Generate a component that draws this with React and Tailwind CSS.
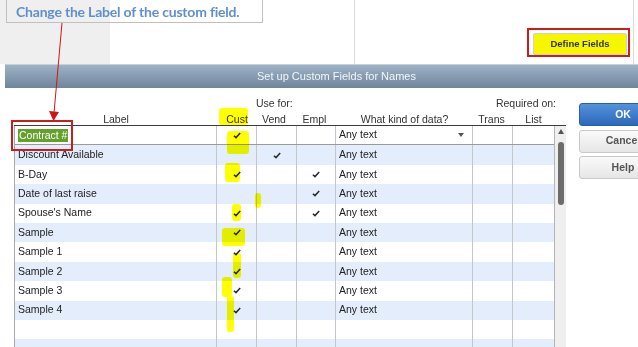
import React from 'react';

const rows = [
  { label: 'Contract #', kind: 'Any text', cust: true, edit: true },
  { label: 'Discount Available', kind: 'Any text', vend: true },
  { label: 'B-Day', kind: 'Any text', cust: true, empl: true },
  { label: 'Date of last raise', kind: 'Any text', empl: true },
  { label: "Spouse's Name", kind: 'Any text', cust: true, empl: true },
  { label: 'Sample', kind: 'Any text', cust: true },
  { label: 'Sample 1', kind: 'Any text', cust: true },
  { label: 'Sample 2', kind: 'Any text', cust: true },
  { label: 'Sample 3', kind: 'Any text', cust: true },
  { label: 'Sample 4', kind: 'Any text', cust: true },
  { label: '', kind: '' },
  { label: '', kind: '' },
];

// yellow highlighter strokes [x, y, w, h]
const marks = [
  [219, 108, 29, 17],
  [227, 131, 22, 23],
  [225, 163, 15, 19],
  [255, 193, 6, 15],
  [232, 204, 9, 17],
  [222, 228, 23, 18],
  [233, 253, 8, 25],
  [222, 277, 10, 20],
  [227, 296, 7, 36],
];

const Check = () => (
  <svg width="8" height="7" viewBox="0 0 8 7">
    <path d="M0.9 3.7 L3 5.6 L7.2 1" fill="none" stroke="#2a2a2a" strokeWidth="1.5" />
  </svg>
);

const cols = 'grid grid-cols-[202px_40px_40px_39px_137px_40px_41px]';
const cell = 'border-r border-[#c3c7cd] flex items-center justify-center';

const Row = ({ r, i }) => (
  <div
    className={`${cols} h-[19.4px] ${i % 2 ? 'bg-[#e3edfb]' : 'bg-white'} ${
      r.edit ? 'border-b border-[#9a9a9a]' : ''
    }`}
  >
    <div className="border-r border-[#c3c7cd] flex items-center pl-[3px]">
      {r.edit ? (
        <span className="bg-[#64a12c] text-white px-[1px] leading-[13px]">{r.label}</span>
      ) : (
        r.label
      )}
    </div>
    <div className={cell}>{r.cust && <Check />}</div>
    <div className={cell}>{r.vend && <Check />}</div>
    <div className={cell}>{r.empl && <Check />}</div>
    <div className="border-r border-[#c3c7cd] flex items-center justify-between pl-[3px] pr-[8px]">
      <span>{r.kind}</span>
      {r.edit && <span className="w-0 h-0 border-x-[3.5px] border-x-transparent border-t-[4px] border-t-[#555]" />}
    </div>
    <div className="border-r border-[#c3c7cd]" />
    <div />
  </div>
);

const Btn = ({ children, primary }) => (
  <div
    className={`h-[23px] w-[88px] rounded-[3px] flex items-center justify-center font-bold text-[10.5px] ${
      primary
        ? 'bg-gradient-to-b from-[#5592db] to-[#2c68b9] text-white border border-[#2a5fa8]'
        : 'bg-gradient-to-b from-[#fafafa] to-[#e6e6e6] text-[#555] border border-[#c9c9c9]'
    }`}
  >
    {children}
  </div>
);

export default function App() {
  return (
    <div className="relative w-[638px] h-[347px] overflow-hidden bg-white text-[#222] font-['Liberation_Sans',Arial,sans-serif] text-[10.5px]">
      {/* window behind the dialog */}
      <div className="flex h-[64px]">
        <div className="w-[110px] bg-[#efefef]" />
        <div className="w-[245px] border-r border-[#dcdcdc]" />
        <div className="w-[279px] border-r border-[#dcdcdc] flex items-end justify-end pr-[6px] pb-[9px]">
          <div className="h-[22px] w-[94px] rounded-[2px] border border-[#d0d0d0] bg-[#f6f600] flex items-center justify-center font-bold text-[9.5px] text-[#333]">
            Define Fields
          </div>
        </div>
      </div>

      {/* dialog title */}
      <div className="ml-[5px] w-[663px] h-[24px] bg-gradient-to-b from-[#9fb2c6] to-[#6f859c] border-t border-[#c4d0dc] flex items-center justify-center text-[11px] text-[#f4f6f9]">
        Set up Custom Fields for Names
      </div>

      {/* dialog body */}
      <div className="flex">
        <div className="ml-[14px] w-[552px]">
          <div className="h-[37px] pt-[9px] flex flex-col gap-[4px] text-[#333]">
            <div className={`${cols} ml-[1px] h-[12px] leading-[12px]`}>
              <div />
              <div />
              <div className="col-span-2 -ml-[1px]">Use for:</div>
              <div />
              <div className="col-span-2 text-right -mr-[2px]">Required on:</div>
            </div>
            <div className={`${cols} ml-[1px] h-[12px] leading-[12px] text-center`}>
              <div>Label</div>
              <div>Cust</div>
              <div className="pr-[6px]">Vend</div>
              <div className="pr-[4px]">Empl</div>
              <div>What kind of data?</div>
              <div className="pr-[3px]">Trans</div>
              <div>List</div>
            </div>
          </div>

          <div className="flex border-t-[1.5px] border-[#3c3c3c]">
            <div className="w-[540px] border-l border-[#a9a9a9]">
              {rows.map((r, i) => (
                <Row key={i} r={r} i={i} />
              ))}
            </div>
            <div className="w-[12px] h-[222px] bg-[#efefef] border-l border-[#b5b5b5] flex flex-col items-center">
              <span className="mt-[3px] w-0 h-0 border-x-[3.5px] border-x-transparent border-b-[5px] border-b-[#555]" />
              <span className="mt-[8px] w-[6px] h-[63px] rounded-[3px] bg-[#6c6c6c]" />
            </div>
          </div>
        </div>

        <div className="ml-[13px] pt-[15px] flex flex-col gap-[3.5px]">
          <Btn primary>OK</Btn>
          <Btn>Cancel</Btn>
          <Btn>Help</Btn>
        </div>
      </div>

      {/* annotations */}
      <div className="absolute left-[6px] -top-[1px] w-[257px] h-[24px] border border-[#c0c0c0] flex items-center pl-[9px] font-['Lato',sans-serif] font-bold text-[14px] text-[#5f90cb] tracking-[-0.2px]">
        Change the Label of the custom field.
      </div>
      <svg className="absolute left-0 top-0" width="120" height="130">
        <line x1="62" y1="23" x2="54" y2="113" stroke="#d21414" strokeWidth="1" />
        <polygon points="49,111 59,112 53.5,121" fill="#d21414" />
      </svg>
      <div className="absolute left-[11px] top-[120px] w-[62px] h-[31px] border-2 border-[#c81e1e]" />
      <div className="absolute left-[527px] top-[28px] w-[103px] h-[29px] border-2 border-[#c81e1e]" />
      {marks.map(([x, y, w, h], i) => (
        <div
          key={i}
          className="absolute bg-[#ffff00] rounded-[3px] mix-blend-multiply"
          style={{ left: x, top: y, width: w, height: h }}
        />
      ))}
    </div>
  );
}
